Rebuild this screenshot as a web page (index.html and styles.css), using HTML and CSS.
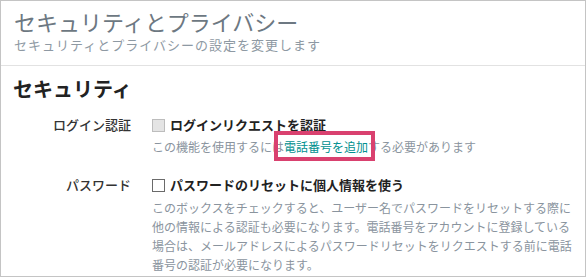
FILE: index.html
```html
<!DOCTYPE html>
<html lang="ja">
<head>
<meta charset="utf-8">
<title>セキュリティとプライバシー</title>
<link rel="stylesheet" href="styles.css">
</head>
<body>
<div class="panel">
  <header class="header">
    <h1 class="title">セキュリティとプライバシー</h1>
    <p class="subtitle">セキュリティとプライバシーの設定を変更します</p>
  </header>
  <section class="section">
    <h2 class="section-title">セキュリティ</h2>
    <div class="settings">
      <div class="label label-first">ログイン認証</div>
      <div class="field field-first">
        <label class="check"><span class="box box-disabled"></span><span class="check-text">ログインリクエストを認証</span></label>
        <p class="help">この機能を使用するには<span class="callout"><a class="link" href="#">電話番号を追加</a></span>する必要があります</p>
      </div>
      <div class="label label-second">パスワード</div>
      <div class="field field-second">
        <label class="check"><span class="box"></span><span class="check-text">パスワードのリセットに個人情報を使う</span></label>
        <p class="desc">このボックスをチェックすると、ユーザー名でパスワードをリセットする際に他の情報による認証も必要になります。電話番号をアカウントに登録している場合は、メールアドレスによるパスワードリセットをリクエストする前に電話番号の認証が必要になります。</p>
      </div>
    </div>
  </section>
</div>
</body>
</html>
```

FILE: styles.css
```css
html, body {
  margin: 0;
  padding: 0;
  background: #ffffff;
}
body {
  font-family: "Noto Sans CJK JP", "Noto Sans", sans-serif;
  width: 587px;
  height: 277px;
  overflow: hidden;
}
.panel {
  box-sizing: border-box;
  width: 586px;
  height: 277px;
  border: 1px solid #c4c4c4;
  overflow: hidden;
}
.header {
  padding: 5px 13px 11px;
  border-bottom: 1px solid #e2e2e2;
}
.title {
  margin: 0;
  font-size: 22px;
  line-height: 30px;
  font-weight: 400;
  color: #6d7882;
}
.subtitle {
  margin: 0;
  font-size: 13px;
  line-height: 18px;
  letter-spacing: 1px;
  color: #8e99a3;
}
.section {
  padding: 9px 0 0 12px;
}
.section-title {
  margin: 0;
  font-size: 20px;
  line-height: 28px;
  font-weight: 700;
  color: #222222;
}
.settings {
  display: grid;
  grid-template-columns: 118px 1fr;
  column-gap: 21px;
  margin-top: 12px;
}
.label {
  text-align: right;
  font-size: 13px;
  line-height: 20px;
  font-weight: 500;
  color: #333333;
}
.label-second {
  margin-top: 18px;
}
.field-second {
  margin-top: 18px;
}
.check {
  display: flex;
  align-items: center;
  gap: 5px;
  height: 20px;
}
.box {
  box-sizing: border-box;
  width: 13px;
  height: 13px;
  border: 1px solid #6a6a6a;
  background: #ffffff;
}
.box-disabled {
  border-color: #bdbdbd;
  background: #e4e4e4;
}
.check-text {
  font-size: 13px;
  line-height: 20px;
  font-weight: 700;
  color: #222222;
}
.help {
  margin: 2px 0 0;
  font-size: 12px;
  line-height: 20px;
  color: #8a949e;
}
.callout {
  position: relative;
}
.callout::after {
  content: "";
  position: absolute;
  left: -10px;
  right: -7px;
  top: -7px;
  bottom: -6px;
  border: 4px solid #d9416f;
  pointer-events: none;
}
.link {
  color: #00908f;
  text-decoration: none;
}
.desc {
  margin: 3px 0 0;
  width: 426px;
  font-size: 12px;
  line-height: 19px;
  color: #8a949e;
}
```
